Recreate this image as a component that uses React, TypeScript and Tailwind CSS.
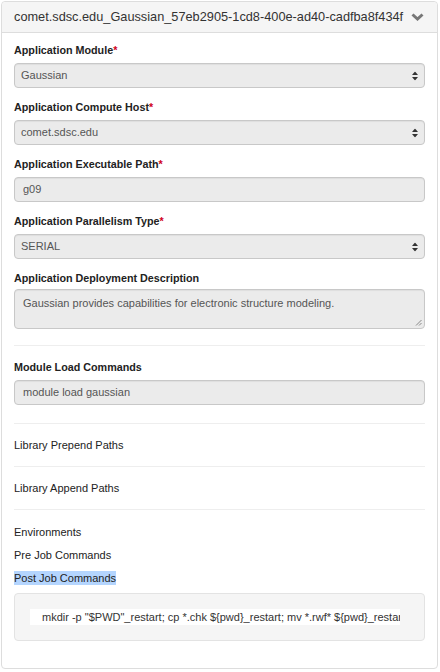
import React from "react";

const font = "[font-family:'Liberation_Sans',Arial,sans-serif]";

const SelectArrows = () => (
  <svg width="6" height="9" viewBox="0 0 6 9" className="absolute right-[6px] top-1/2 -translate-y-1/2">
    <path d="M0 3.5 L3 0 L6 3.5 Z" fill="#333" />
    <path d="M0 5.5 L3 9 L6 5.5 Z" fill="#333" />
  </svg>
);

const Label = ({ text, required, mb = "mb-[5px]" }: { text: string; required?: boolean; mb?: string }) => (
  <div className={`text-[10.75px] leading-4 font-bold text-[#222] ${mb}`}>
    {text}
    {required && <span className="text-[#d0021b]">*</span>}
  </div>
);

const SelectBox = ({ value }: { value: string }) => (
  <div className="relative h-[25px] rounded-[4px] border border-[#c8c8c8] bg-[#ebebeb] shadow-[inset_0_1px_1px_rgba(0,0,0,0.06)] flex items-center pl-[6px] text-[11px] text-[#555]">
    {value}
    <SelectArrows />
  </div>
);

const InputBox = ({ value }: { value: string }) => (
  <div className="h-[25px] rounded-[4px] border border-[#c8c8c8] bg-[#ebebeb] shadow-[inset_0_1px_1px_rgba(0,0,0,0.06)] flex items-center pl-[8px] text-[11px] text-[#555]">
    {value}
  </div>
);

const Divider = () => <div className="h-px bg-[#eeeeee]" />;

export default function App() {
  return (
    <div className={`${font} bg-white min-h-[672px] pt-px pl-px`}>
      <div className="w-[437px] rounded-[4px] border border-[#dddddd] bg-white">
        {/* panel heading */}
        <div className="h-[31px] bg-[#f5f5f5] border-b border-[#dddddd] rounded-t-[4px] flex items-center justify-between px-[12px]">
          <span className="text-[12.75px] text-[#333]">comet.sdsc.edu_Gaussian_57eb2905-1cd8-400e-ad40-cadfba8f434f</span>
          <svg width="13" height="8" viewBox="0 0 13 8" className="mr-px">
            <polyline points="1.5,1.5 6.5,6 11.5,1.5" fill="none" stroke="#777" strokeWidth="3" />
          </svg>
        </div>

        <div className="px-[12px] pt-[9px] pb-[27px]">
          <div className="mb-[11px]">
            <Label text="Application Module" required />
            <SelectBox value="Gaussian" />
          </div>
          <div className="mb-[11px]">
            <Label text="Application Compute Host" required />
            <SelectBox value="comet.sdsc.edu" />
          </div>
          <div className="mb-[11px]">
            <Label text="Application Executable Path" required />
            <InputBox value="g09" />
          </div>
          <div className="mb-[11px]">
            <Label text="Application Parallelism Type" required />
            <SelectBox value="SERIAL" />
          </div>
          <div className="mb-[16px]">
            <Label text="Application Deployment Description" mb="mb-[3px]" />
            <div className="relative h-[40px] rounded-[4px] border border-[#c8c8c8] bg-[#ebebeb] shadow-[inset_0_1px_1px_rgba(0,0,0,0.06)] pl-[8px] pt-[5px] text-[11px] leading-4 text-[#555]">
              Gaussian provides capabilities for electronic structure modeling.
              <svg width="7" height="7" viewBox="0 0 7 7" className="absolute right-[2px] bottom-[2px]">
                <line x1="1" y1="6.5" x2="6.5" y2="1" stroke="#888" strokeWidth="1" />
                <line x1="4" y1="6.5" x2="6.5" y2="4" stroke="#888" strokeWidth="1" />
              </svg>
            </div>
          </div>

          <Divider />

          <div className="pt-[13px] pb-[18px]">
            <Label text="Module Load Commands" />
            <InputBox value="module load gaussian" />
          </div>

          <Divider />
          <div className="py-[13px] text-[11px] leading-4 text-[#222]">Library Prepend Paths</div>
          <Divider />
          <div className="py-[13px] text-[11px] leading-4 text-[#222]">Library Append Paths</div>
          <Divider />

          <div className="pt-[14px] flex flex-col gap-[7px] text-[11px] leading-4 text-[#222]">
            <div>Environments</div>
            <div>Pre Job Commands</div>
            <div>
              <span className="bg-[#b4d5fe] py-px">Post Job Commands</span>
            </div>
          </div>

          <div className="mt-[7px] rounded-[4px] border border-[#e3e3e3] bg-[#f5f5f5] p-[15px]">
            <div className="w-[370px] h-[16px] bg-white flex items-center pl-[12px] overflow-hidden whitespace-nowrap text-[11px] text-[#333]">
              {"mkdir -p \"$PWD\"_restart; cp *.chk ${pwd}_restart; mv *.rwf* ${pwd}_restart"}
            </div>
          </div>
        </div>
      </div>
    </div>
  );
}
